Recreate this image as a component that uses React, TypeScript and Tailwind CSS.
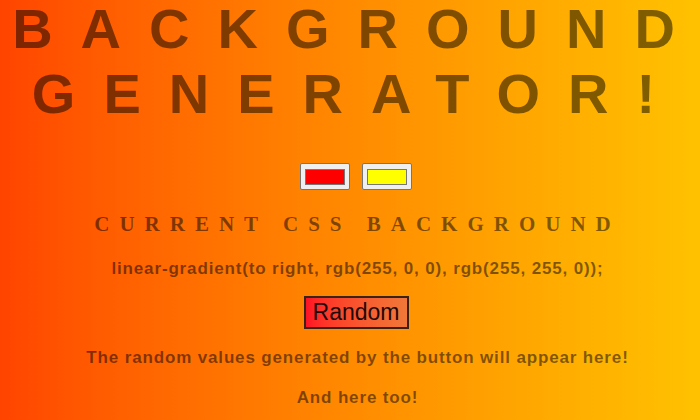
import React from 'react';

const sans = { fontFamily: '"Liberation Sans", Arial, sans-serif' };
const serif = { fontFamily: '"Liberation Serif", "Times New Roman", serif' };

const ColorSwatch: React.FC<{ color: string }> = ({ color }) => (
    <div className="w-[50px] h-[27px] bg-[#efefef] border border-[#767676] rounded-[2px] px-[4px] pt-[5px] pb-[4px]">
        <div className="w-full h-full border border-[#777777]" style={{ backgroundColor: color }} />
    </div>
);

const App: React.FC = () => {
    return (
        <div
            className="w-[700px] h-[420px] overflow-hidden pl-[15px] bg-gradient-to-r from-[#ff4400] to-[#ffc200] text-black/50"
            style={sans}
        >
            <h1 className="mt-[-4px] text-[56px] font-bold tracking-[0.5em] leading-[65px] uppercase">
                <div className="flex justify-center whitespace-nowrap">Background</div>
                <div className="flex justify-center whitespace-nowrap">Generator!</div>
            </h1>

            <div className="mt-[37px] flex justify-center gap-[12px] pr-[3px]">
                <ColorSwatch color="#ff0000" />
                <ColorSwatch color="#ffff00" />
            </div>

            <h3
                className="mt-[22px] flex justify-center whitespace-nowrap text-[21px] font-bold tracking-[10px] leading-[24px] uppercase"
                style={serif}
            >
                Current CSS Background
            </h3>

            <p className="mt-[23px] text-center text-[17px] font-bold tracking-[0.85px] leading-[20px]">
                linear-gradient(to right, rgb(255, 0, 0), rgb(255, 255, 0));
            </p>

            <div className="mt-[17px] flex justify-center pr-[3px]">
                <button className="w-[105px] h-[33px] border-2 border-[#3b2218] bg-gradient-to-r from-[#ff1024] to-[#f07838] text-[23px] leading-none text-[#1c0a0a]">
                    Random
                </button>
            </div>

            <p className="mt-[19px] text-center text-[17px] font-bold tracking-[0.85px] leading-[20px] whitespace-nowrap">
                The random values generated by the button will appear here!
            </p>
            <p className="mt-[20px] text-center text-[17px] font-bold tracking-[0.85px] leading-[20px]">
                And here too!
            </p>
        </div>
    );
};

export default App;
